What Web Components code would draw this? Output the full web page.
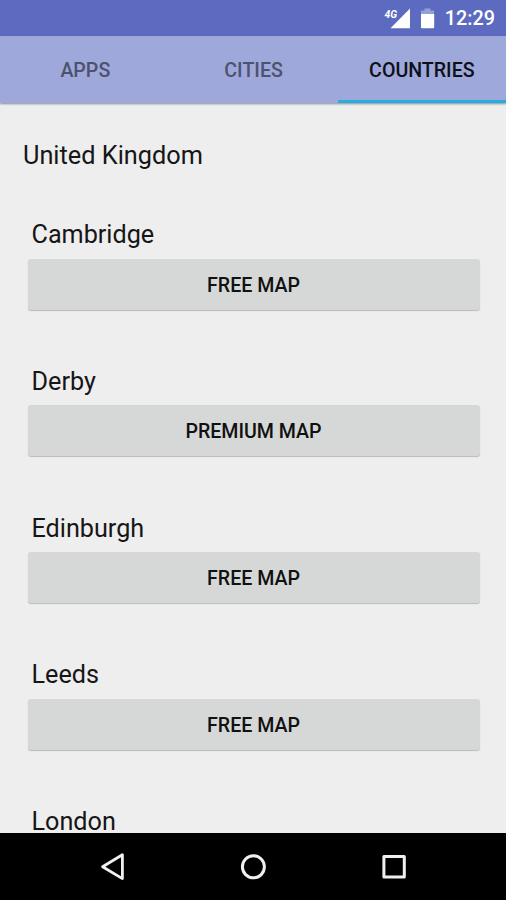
<!DOCTYPE html>
<html lang="en">
<head>
<meta charset="utf-8">
<title>Countries</title>
<style>
html, body { margin: 0; height: 100%; }
body { overflow: hidden; background: #eee; font-family: Roboto, "Liberation Sans", sans-serif; }
</style>
</head>
<body>
<map-app></map-app>
<script>
const define = (name, html) => {
  const template = document.createElement('template');
  template.innerHTML = html;
  customElements.define(name, class extends HTMLElement {
    constructor() {
      super();
      this.attachShadow({ mode: 'open' }).append(template.content.cloneNode(true));
    }
  });
};

define('status-bar', `
<style>
:host { display: flex; box-sizing: border-box; height: 35.5px; justify-content: flex-end; align-items: center; padding: 3px 11px 0 0; background: #5c6bc0; color: #fff; font-size: 19.8px; font-weight: 500; }
svg { display: block; flex: none; overflow: visible; }
.signal { margin-right: 10px; }
.battery { margin-right: 9.5px; }
.net { font: italic 700 11.5px Roboto, sans-serif; }
time { line-height: 24px; }
</style>
<svg class="signal" width="26" height="22" viewBox="384 8 26 22"><path fill="#fff" d="M410 8.5V28.3H390.5Z"/><path d="M384 8h14.5v8.5L394 19h-10Z" fill="#5c6bc0"/><text class="net" x="384.6" y="17.6" fill="#fff" textLength="12.6" lengthAdjust="spacingAndGlyphs">4G</text></svg>
<svg class="battery" width="15" height="22" viewBox="421 8 15 22"><path fill="#949fd5" d="M425.5 8.5h6v2h3.5V14h-13v-3.5h3.5Z"/><path fill="#fff" d="M422 14h13.2v13.3q0 1-1 1H423q-1 0-1-1Z"/></svg>
<time><slot></slot></time>`);

define('tab-item', `
<style>
:host { flex: 1; display: flex; align-items: center; justify-content: center; box-sizing: border-box; padding-top: 5px; border-bottom: 3px solid transparent; color: #4d526f; font-size: 19.6px; font-weight: 500; }
:host([selected]) { border-color: #26ade0; color: #0e1018; }
</style><span><slot></slot></span>`);

define('tab-bar', `
<style>
:host { display: flex; box-sizing: border-box; height: 67.5px; padding-left: 1.2px; background: #9fa8da; box-shadow: 0 1px 2px rgba(0,0,0,.42); position: relative; }
</style><slot></slot>`);

define('map-button', `
<style>
:host { display: block; }
button { display: block; width: 100%; height: 51px; margin: 0; padding: 2px 0 0; border: 0; border-radius: 3px; background: #d6d8d7; box-shadow: 0 1px 1px rgba(0,0,0,.22); color: #111; font: 500 19.6px Roboto, sans-serif; }
</style><button><slot></slot></button>`);

define('city-entry', `
<style>
:host { display: block; height: 146.75px; }
h3 { margin: 0 0 11.6px 4px; font-size: 25.2px; line-height: 24px; font-weight: 400; }
</style><h3><slot name="city"></slot></h3><slot></slot>`);

define('nav-bar', `
<style>
:host { display: flex; height: 66.6px; flex: none; align-items: center; justify-content: center; background: #000; position: relative; }
div { display: grid; grid-template-columns: repeat(3, 140.5px); justify-items: center; }
svg { display: block; fill: none; stroke: #f0f0f0; stroke-width: 3; stroke-linejoin: round; }
</style>
<div>
<svg width="30" height="30" viewBox="0 0 30 30"><path d="M4.6 14.7 24.4 2.8V26.6Z" stroke-width="2.8"/></svg>
<svg width="30" height="30" viewBox="0 0 30 30"><circle cx="15.4" cy="14.8" r="11"/></svg>
<svg width="30" height="30" viewBox="0 0 30 30"><rect x="4.9" y="4.6" width="20.4" height="20.4"/></svg>
</div>`);

define('map-app', `
<style>
:host { display: flex; flex-direction: column; height: 100vh; background: #eee; color: #161616; }
main { flex: 1; min-height: 0; overflow: hidden; padding: 38.1px 26.5px 0 27.5px; }
h2 { margin: 0 0 52px -4.5px; font-size: 25.3px; line-height: 30px; font-weight: 400; }
</style>
<status-bar>12:29</status-bar>
<tab-bar><tab-item>APPS</tab-item><tab-item>CITIES</tab-item><tab-item selected>COUNTRIES</tab-item></tab-bar>
<main>
<h2>United Kingdom</h2>
<city-entry><span slot="city">Cambridge</span><map-button>FREE MAP</map-button></city-entry>
<city-entry><span slot="city">Derby</span><map-button>PREMIUM MAP</map-button></city-entry>
<city-entry><span slot="city">Edinburgh</span><map-button>FREE MAP</map-button></city-entry>
<city-entry><span slot="city">Leeds</span><map-button>FREE MAP</map-button></city-entry>
<city-entry><span slot="city">London</span></city-entry>
</main>
<nav-bar></nav-bar>`);
</script>
</body>
</html>
